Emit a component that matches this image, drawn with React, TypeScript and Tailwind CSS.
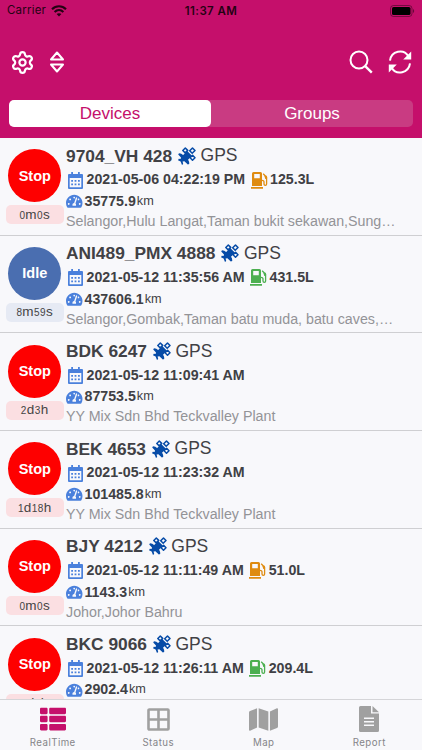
import type { ReactNode } from "react";
import { Settings } from "lucide-react";
import { FaTachometerAlt, FaThList, FaMap } from "react-icons/fa";

type Device = {
  name: string;
  state: "Stop" | "Idle";
  duration: [string, string][];
  time: string;
  fuel?: string;
  fuelColor?: string;
  odometer: string;
  address: string;
};

const devices: Device[] = [
  { name: "9704_VH 428", state: "Stop", duration: [["0", "m"], ["0", "s"]], time: "2021-05-06 04:22:19 PM", fuel: "125.3L", fuelColor: "text-[#df8b10]", odometer: "35775.9", address: "Selangor,Hulu Langat,Taman bukit sekawan,Sung…" },
  { name: "ANI489_PMX 4888", state: "Idle", duration: [["8", "m"], ["59", "s"]], time: "2021-05-12 11:35:56 AM", fuel: "431.5L", fuelColor: "text-[#4caf50]", odometer: "437606.1", address: "Selangor,Gombak,Taman batu muda, batu caves,…" },
  { name: "BDK 6247", state: "Stop", duration: [["2", "d"], ["3", "h"]], time: "2021-05-12 11:09:41 AM", odometer: "87753.5", address: "YY Mix Sdn Bhd Teckvalley Plant" },
  { name: "BEK 4653", state: "Stop", duration: [["1", "d"], ["18", "h"]], time: "2021-05-12 11:23:32 AM", odometer: "101485.8", address: "YY Mix Sdn Bhd Teckvalley Plant" },
  { name: "BJY 4212", state: "Stop", duration: [["0", "m"], ["0", "s"]], time: "2021-05-12 11:11:49 AM", fuel: "51.0L", fuelColor: "text-[#df8b10]", odometer: "1143.3", address: "Johor,Johor Bahru" },
  { name: "BKC 9066", state: "Stop", duration: [["1", "d"], ["1", "h"]], time: "2021-05-12 11:26:11 AM", fuel: "209.4L", fuelColor: "text-[#4caf50]", odometer: "2902.4", address: "" },
];

function WifiIcon() {
  return (
    <svg width="16" height="12" viewBox="0 0 16 12" fill="none" stroke="currentColor" strokeWidth="2.1">
      <path d="M1 4.200C5 .200 11 .200 15 4.200M3.600 7c2.600-2.500 6.200-2.500 8.800 0" />
      <path d="M8 11.500 5.600 9.100c1.400-1.300 3.400-1.300 4.800 0z" fill="currentColor" stroke="none" />
    </svg>
  );
}

function BatteryIcon() {
  return (
    <svg width="25" height="12" viewBox="0 0 25 12">
      <rect x=".5" y=".5" width="21.5" height="11" rx="3" fill="none" stroke="#000" strokeOpacity=".4" />
      <rect x="2" y="2" width="18.5" height="8" rx="1.6" />
      <path d="M23 4v4c1.6-.6 1.6-3.4 0-4z" fillOpacity=".45" />
    </svg>
  );
}

function SortIcon() {
  return (
    <svg width="16" height="22" viewBox="0 0 16 22" fill="none" stroke="currentColor" strokeWidth="2" strokeLinejoin="round">
      <path d="M8 1.500 14 8.500H2zM8 20.500 14 13.500H2z" />
    </svg>
  );
}

function SearchIcon() {
  return (
    <svg width="24" height="24" viewBox="0 0 24 24" fill="none" stroke="currentColor" strokeWidth="2">
      <circle cx="10" cy="10" r="8.500" />
      <path d="m16.200 16.200 6.600 6.400" strokeWidth="2.400" />
    </svg>
  );
}

function RefreshIcon() {
  return (
    <svg width="24" height="24" viewBox="0 0 24 24" fill="none" stroke="currentColor" strokeWidth="2">
      <path d="M2 10.600C3.200 1 15.500-1.800 20.400 6.200M22 13.400C20.800 23 8.500 25.800 3.600 17.800" />
      <path d="M23.200 1.500v8h-8zM.8 22.500v-8h8z" fill="currentColor" stroke="none" />
    </svg>
  );
}

function SatelliteIcon() {
  return (
    <svg width="18" height="18" viewBox="0 0 18 18" fill="#064ba7">
      {/* dish and body */}
      <path d="M1 6.200c1.800.2 3 .8 4.200 1.800l4-4 4.800 4.800-4 4c1 1.200 1.400 2.600 1.200 4.200l-1.400.6-3.400-3.400-1.800.2.6 2.600-1.200 1-1.400-3.600L0 13.200l.8-1.400 1.800.2.4-1.600L.2 7.600z" />
      {/* panels */}
      <path d="m7.300 1 2.400 2.400-2.500 2.500-2.400-2.400zM14.600 8.300l2.400 2.400-2.500 2.500-2.400-2.400zM14.500 1 17 3.500l-2.800 2.800-2.500-2.500z" fill="#f8f8fb" stroke="#064ba7" strokeWidth="1.500" strokeLinejoin="round" />
    </svg>
  );
}

function CalendarIcon() {
  return (
    <svg width="15" height="17" viewBox="0 0 15 17" fill="#4a80dc">
      <path fillRule="evenodd" d="M1 2h2.200V0H5v2h5V0h1.800v2H14a1 1 0 0 1 1 1v13a1 1 0 0 1-1 1H1a1 1 0 0 1-1-1V3a1 1 0 0 1 1-1zm.7 4v9.300h11.600V6z" />
      <path d="M3.200 8H5v1.800H3.200zm3.400 0h1.800v1.800H6.600zM10 8h1.800v1.800H10zM3.200 11.500H5v1.800H3.200zm3.400 0h1.800v1.800H6.600zm3.400 0h1.800v1.800H10z" />
    </svg>
  );
}

function FuelIcon() {
  return (
    <svg width="17" height="17" viewBox="0 0 17 17" fill="currentColor">
      <path fillRule="evenodd" d="M2.500 0h7A1.500 1.500 0 0 1 11 1.500V14H1V1.500A1.500 1.500 0 0 1 2.500 0zM3.200 2v4.200h5.600V2zM0 15h12v1.700H0z" />
      <path d="m12.200 1.800 3.400 3.400V12c0 1.900-2.600 1.900-2.600 0V9.800c0-1-.8-1.500-2-1.500" fill="none" stroke="currentColor" strokeWidth="1.300" />
      <path d="M13.300 3.800h2.500V7h-1.500z" />
    </svg>
  );
}

function StatusIcon() {
  return (
    <svg width="23" height="23" viewBox="0 0 23 23" fill="none" stroke="currentColor" strokeWidth="2.600">
      <rect x="1.500" y="1.500" width="20" height="20" rx=".8" />
      <path d="M11.500 2v19M2 11.500h19" />
    </svg>
  );
}

function ReportIcon() {
  return (
    <svg width="20" height="26" viewBox="0 0 20 26" fill="currentColor">
      <path fillRule="evenodd" d="M1.500 0H12v7.500h8v17a1.500 1.500 0 0 1-1.500 1.500h-17A1.500 1.500 0 0 1 0 24.500v-23A1.500 1.500 0 0 1 1.500 0zM5 11.500V13h10v-1.500zM5 15v1.500h10V15zm0 3.500V20h10v-1.500z" />
      <path d="M13.500 0 20 6.200h-6.500z" />
    </svg>
  );
}

function DeviceRow({ device }: { device: Device }) {
  const idle = device.state === "Idle";
  return (
    <div className="flex h-[97.7px] shrink-0 border-b border-[#cfcfd2]">
      <div className="ml-[5.5px] flex w-[58.5px] shrink-0 flex-col items-center pt-[11.4px]">
        <div className={`flex size-[53px] items-center justify-center rounded-full pt-px text-[14.5px] font-bold text-white ${idle ? "bg-[#4a6eb0]" : "bg-[#fe0000]"}`}>
          {device.state}
        </div>
        <div className={`mt-[3px] flex h-[19px] w-full items-center justify-center rounded-[5px] text-[13.5px] tracking-[0.4px] text-[#444] ${idle ? "bg-[#e6eaf4]" : "bg-[#fbdfe2]"}`}>
          <span>
            {device.duration.map(([value, unit], i) => (
              <span key={i}><span className="text-[10px]">{value}</span>{unit}</span>
            ))}
          </span>
        </div>
      </div>
      <div className="min-w-0 pl-[2px] pt-[6px] whitespace-nowrap">
        <div className="flex h-[23px] items-center text-[17.35px] text-[#414145]">
          <span className="font-bold">{device.name}</span>
          <span className="ml-[6px] mr-[4.5px]"><SatelliteIcon /></span>
          <span className="text-[17.5px]">GPS</span>
        </div>
        <div className="flex h-[26px] items-center pl-[2px] text-[14.2px] font-bold text-[#404044]">
          <CalendarIcon />
          <span className="ml-[3.5px]">{device.time}</span>
          {device.fuel && (
            <>
              <span className={`ml-[5.5px] mr-[2.5px] ${device.fuelColor}`}><FuelIcon /></span>
              <span>{device.fuel}</span>
            </>
          )}
        </div>
        <div className="flex h-[17px] items-center text-[#404044]">
          <FaTachometerAlt className="size-[16.5px] text-[#4a80dc]" />
          <span className="ml-[2px] text-[14.2px] font-bold">{device.odometer}</span>
          <span className="ml-px text-[12.7px]">km</span>
        </div>
        <div className="h-[22px] text-[14.25px] leading-[22px] text-[#939397]">{device.address}</div>
      </div>
    </div>
  );
}

function Tab({ label, active, children }: { label: string; active?: boolean; children: ReactNode }) {
  return (
    <div className="flex flex-1 flex-col items-center">
      <div className={`flex h-[38px] items-center ${active ? "text-[#c50f6b]" : "text-[#a0a0a0]"}`}>{children}</div>
      <span className="font-[Inter] text-[9.7px] leading-[10px] tracking-[0.45px] text-[#858589]">{label}</span>
    </div>
  );
}

export default function App() {
  return (
    <div className="flex h-[750px] w-[422px] flex-col overflow-hidden bg-[#f8f8fb] font-['Liberation_Sans',sans-serif]">
      <header className="h-[138px] shrink-0 bg-[#c50f6b]">
        <div className="grid h-[22px] grid-cols-3 items-center px-[7px] font-[Inter] text-[11.5px] text-[#250213]">
          <div className="flex items-center gap-[5px] tracking-[0.2px]">Carrier <WifiIcon /></div>
          <div className="pt-px text-center font-semibold tracking-[0.4px]">11:37 AM</div>
          <div className="flex justify-end"><BatteryIcon /></div>
        </div>
        <div className="flex h-[78px] items-center justify-between px-[10px] pt-[2px] text-white">
          <div className="flex items-center gap-[14px]">
            <Settings size={25} strokeWidth={2.1} />
            <SortIcon />
          </div>
          <div className="flex items-center gap-[15px]">
            <SearchIcon />
            <RefreshIcon />
          </div>
        </div>
        <div className="mx-[9px] flex h-[27px] rounded-[5px] bg-[#c93b82] text-[17px] text-white">
          <div className="flex flex-1 items-center justify-center rounded-[5px] bg-white text-[#c50f6b]">Devices</div>
          <div className="flex flex-1 items-center justify-center">Groups</div>
        </div>
      </header>
      <main className="flex min-h-0 flex-1 flex-col overflow-hidden">
        {devices.map((device) => (
          <DeviceRow key={device.name} device={device} />
        ))}
      </main>
      <nav className="flex h-[51px] shrink-0 border-t border-[#d5d5d8] bg-[#f8f8fb]">
        <Tab label="RealTime" active><FaThList className="size-[26px]" /></Tab>
        <Tab label="Status"><StatusIcon /></Tab>
        <Tab label="Map"><FaMap className="size-[29px]" /></Tab>
        <Tab label="Report"><ReportIcon /></Tab>
      </nav>
    </div>
  );
}
